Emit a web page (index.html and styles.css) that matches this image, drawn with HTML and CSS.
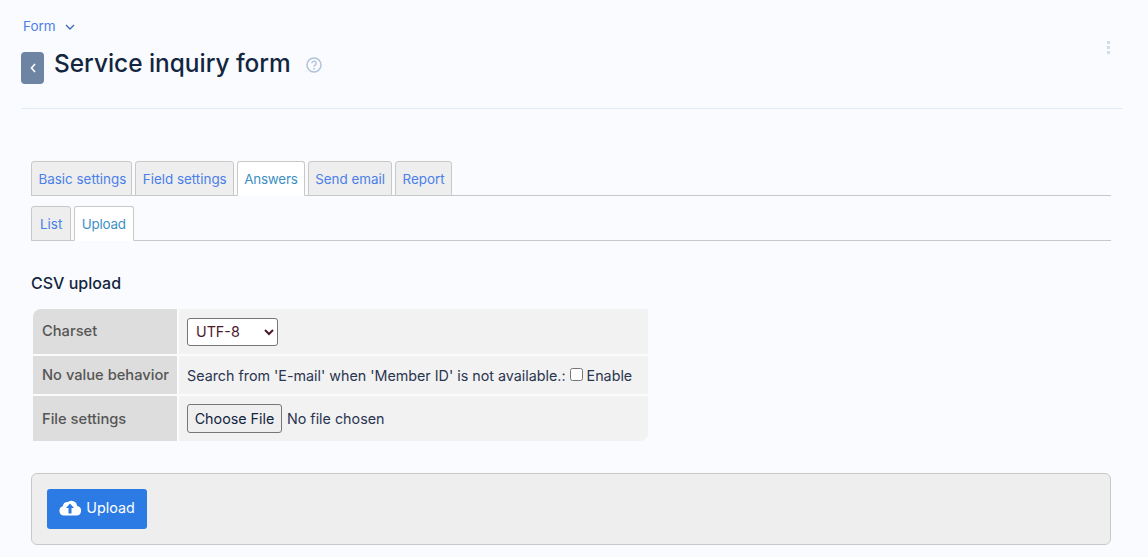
FILE: index.html
```html
<!DOCTYPE html>
<html lang="en">
<head>
    <meta charset="UTF-8">
    <meta name="viewport" content="width=device-width, initial-scale=1.0">
    <title>Service inquiry form</title>
    <link rel="stylesheet" href="styles.css">
</head>
<body>
    <div class="page-head">
        <a class="crumb" href="#">Form
            <svg class="crumb-arrow" width="10" height="6" viewBox="0 0 10 6"><path d="M1 1l4 4 4-4" fill="none" stroke="currentColor" stroke-width="1.3"/></svg>
        </a>
        <div class="title-row">
            <a class="back" href="#">
                <svg width="6" height="10" viewBox="0 0 6 10"><path d="M5 1L1.5 5 5 9" fill="none" stroke="#fff" stroke-width="1.6"/></svg>
            </a>
            <h1>Service inquiry form</h1>
            <svg class="help" width="16" height="16" viewBox="0 0 16 16">
                <circle cx="8" cy="8" r="7" fill="none" stroke="currentColor" stroke-width="1.5"/>
                <path d="M5.9 6.3a2.1 2.1 0 1 1 3.2 1.8c-.7.4-1.1.8-1.1 1.6" fill="none" stroke="currentColor" stroke-width="1.4"/>
                <circle cx="8" cy="11.7" r=".9" fill="currentColor"/>
            </svg>
            <div class="dots"><i></i><i></i><i></i></div>
        </div>
    </div>

    <div class="content">
        <ul class="tabs main-tabs">
            <li><a href="#">Basic settings</a></li>
            <li><a href="#">Field settings</a></li>
            <li class="active"><a href="#">Answers</a></li>
            <li><a href="#">Send email</a></li>
            <li><a href="#">Report</a></li>
        </ul>
        <ul class="tabs sub-tabs">
            <li><a href="#">List</a></li>
            <li class="active"><a href="#">Upload</a></li>
        </ul>

        <h2>CSV upload</h2>

        <table class="settings">
            <tr class="row-charset">
                <th>Charset</th>
                <td>
                    <select>
                        <option>UTF-8</option>
                        <option>Shift-JIS</option>
                    </select>
                </td>
            </tr>
            <tr class="row-behavior">
                <th>No value behavior</th>
                <td>Search from 'E-mail' when 'Member ID' is not available.: <label><input type="checkbox"> Enable</label></td>
            </tr>
            <tr class="row-file">
                <th>File settings</th>
                <td><input type="file"></td>
            </tr>
        </table>

        <div class="actions">
            <button type="button" class="upload-btn">
                <svg width="22" height="17" viewBox="0 0 22 17"><path fill="#fff" d="M5 16.500a4.700 4.700 0 0 1-1.200-9.200A5 5 0 0 1 9 2.900 5.800 5.800 0 0 1 18.200 7a4.800 4.800 0 0 1-.7 9.500z"/><path fill="#2c7be5" d="M11 4.500l4 4.500h-2.500v5.500h-3V9H7z"/></svg>
                Upload
            </button>
        </div>
    </div>
</body>
</html>
```

FILE: styles.css
```css
* {
    box-sizing: border-box;
}

html, body {
    height: 100%;
    overflow: hidden;
}

body {
    margin: 0;
    background-color: #fafbfe;
    color: #12263f;
    font-family: "Inter", "Noto Sans", sans-serif;
    font-size: 14px;
}

a {
    text-decoration: none;
}

.page-head {
    margin: 0 25px 0 21px;
    height: 109px;
    padding-top: 18px;
    border-bottom: 1px solid #e3ebf6;
}

.crumb {
    display: block;
    margin-left: 2px;
    color: #4a7fe8;
    font-size: 13.500px;
    line-height: 17px;
}

.crumb-arrow {
    margin-left: 6px;
    vertical-align: 1px;
    color: #3f68b5;
}

.title-row {
    display: flex;
    align-items: flex-start;
    margin-top: 17px;
}

.back {
    display: flex;
    align-items: center;
    justify-content: center;
    width: 23px;
    height: 32px;
    border-radius: 4px;
    background-color: #6e84a3;
}

h1 {
    margin: 0 0 0 10px;
    font-size: 24.400px;
    font-weight: 500;
    line-height: 22px;
}

.help {
    margin: 5px 0 0 15px;
    color: #b1c2d9;
}

.dots {
    display: flex;
    flex-direction: column;
    gap: 2px;
    margin: -11px 13px 0 auto;
}

.dots i {
    width: 3px;
    height: 3px;
    background-color: #d2ddec;
}

.content {
    margin: 0 37px 0 31px;
    padding-top: 52px;
}

.tabs {
    display: flex;
    gap: 3px;
    margin: 0;
    padding: 0;
    list-style: none;
    border-bottom: 1px solid #c8c8c8;
}

.tabs li {
    margin-bottom: -1px;
    border: 1px solid #c8c8c8;
    border-radius: 3px 3px 0 0;
    background-color: #eeeeee;
}

.tabs a {
    display: block;
    padding: 1px 6px 0 6.500px;
    color: #4a7fe8;
    font-size: 13.400px;
    line-height: 32px;
}

.main-tabs li:first-child a {
    padding-right: 5px;
}

.tabs .active {
    border-bottom-color: #fff;
    background-color: #fff;
}

.tabs .active a {
    color: #3d8fc4;
    letter-spacing: -0.2px;
}

.sub-tabs {
    margin-top: 10px;
}

.sub-tabs li:first-child a {
    padding: 1px 8px 0;
}

.sub-tabs .active a {
    padding-right: 7.500px;
}

h2 {
    margin: 32px 0 16px;
    font-size: 16px;
    font-weight: 500;
    line-height: 20px;
}

.settings {
    width: 615px;
    margin-left: 2px;
    border-collapse: collapse;
    font-size: 14.300px;
}

.settings th {
    width: 145px;
    padding: 0 0 0 9px;
    border-bottom: 2px solid #fbfbfd;
    border-right: 2px solid #fbfbfd;
    background-color: #dddddd;
    color: #555;
    font-weight: 500;
    font-size: 14.700px;
    text-align: left;
}

.settings td {
    padding: 0 0 0 8px;
    border-bottom: 2px solid #fbfbfd;
    background-color: #f2f2f2;
    color: #2a3550;
}

.settings tr:last-child th,
.settings tr:last-child td {
    border-bottom: 0;
}

.settings tr:first-child th {
    border-top-left-radius: 8px;
    padding-bottom: 2px;
}

.settings tr:last-child td {
    border-bottom-right-radius: 8px;
}

.row-charset {
    height: 46px;
}

.row-behavior {
    height: 40px;
}

.row-file {
    height: 46px;
}

.settings select {
    width: 91px;
    height: 28px;
    padding-left: 4px;
    background-color: #fff;
    border: 1px solid #767676;
    border-radius: 3px;
    color: #4a1a2a;
    font: inherit;
}

.settings input[type="checkbox"] {
    margin: 0;
    vertical-align: 0;
}

.settings input[type="file"] {
    font: inherit;
    color: #2a3550;
}

.settings input[type="file"]::file-selector-button {
    width: 95px;
    height: 29px;
    margin-right: 5px;
    padding: 0;
    background-color: #efefef;
    border: 1px solid #767676;
    border-radius: 3px;
    color: #12263f;
    font: inherit;
}

.actions {
    margin-top: 32px;
    height: 72px;
    padding: 15px;
    background-color: #eeeeee;
    border: 1px solid #c8c8c8;
    border-radius: 6px;
}

.upload-btn {
    display: flex;
    align-items: center;
    justify-content: center;
    gap: 5px;
    width: 100px;
    height: 40px;
    padding: 0 0 3px;
    border: 0;
    border-radius: 3px;
    background-color: #2c7be5;
    color: #fff;
    font: inherit;
    font-size: 14.300px;
}
```
